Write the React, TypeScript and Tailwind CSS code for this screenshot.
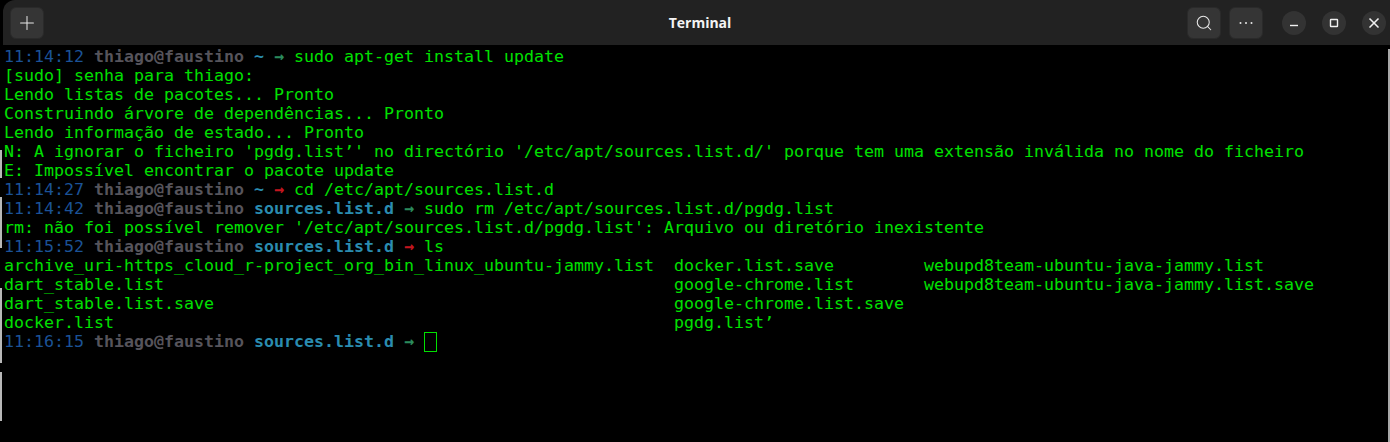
import React from 'react';
import { Plus, Search, X } from 'lucide-react';

// --- prompt segments ---
const Prompt = ({ time, path, ok, cmd }: { time: string; path: string; ok: boolean; cmd?: string }) => (
  <div className="h-[19px]">
    <span className="text-[#1b5296]">{time} </span>
    <span className="font-bold text-[#56545b]">thiago@faustino </span>
    <span className="font-bold text-[#2a8cb0]">{path} </span>
    <span className={ok ? 'font-bold text-[#2b8a5c]' : 'font-bold text-[#c4161f]'}>→ </span>
    {cmd}
  </div>
);

const Line = ({ children }: { children: string }) => <div className="h-[19px]">{children}</div>;

const HeaderButton = ({ children }: { children: React.ReactNode }) => (
  <button className="flex h-[32px] w-[34px] items-center justify-center rounded-md border border-[#2a2a2a] bg-[#353535] text-[#e8e8e8]">
    {children}
  </button>
);

const WindowButton = ({ children }: { children: React.ReactNode }) => (
  <button className="flex h-[24px] w-[24px] items-center justify-center rounded-full bg-[#333333] text-[#f0f0f0]">
    {children}
  </button>
);

export default function App() {
  return (
    <div className="flex h-[442px] w-[1390px] overflow-hidden bg-black">
      {/* sliver of desktop behind the window */}
      <div className="flex w-[3px] flex-col bg-black pt-[150px]">
        <div className="h-[28px] w-[2px] bg-[#b8b8b8]" />
        <div className="h-[19px]" />
        <div className="h-[51px] w-[2px] bg-[#b8b8b8]" />
        <div className="h-[40px]" />
        <div className="h-[75px] w-[2px] bg-[#b8b8b8]" />
        <div className="h-[9px]" />
        <div className="h-[49px] w-[2px] bg-[#b8b8b8]" />
      </div>

      <div className="flex min-w-0 flex-1 flex-col">
        <header className="grid h-[45px] grid-cols-[1fr_auto_1fr] items-center rounded-tl-xl bg-[#222222] pl-[7px]">
          <div className="flex">
            <HeaderButton>
              <Plus size={22} strokeWidth={1.1} />
            </HeaderButton>
          </div>
          <div className="font-['Open_Sans',sans-serif] text-[14px] font-bold text-[#f4f4f4]">Terminal</div>
          <div className="flex items-center justify-end pr-[4px]">
            <div className="flex items-center gap-[8px]">
              <HeaderButton>
                <Search size={18} strokeWidth={1.4} />
              </HeaderButton>
              <HeaderButton>
                <svg width="16" height="16" viewBox="0 0 16 16" fill="currentColor">
                  <circle cx="2.5" cy="8" r="1" />
                  <circle cx="8" cy="8" r="1" />
                  <circle cx="13.5" cy="8" r="1" />
                </svg>
              </HeaderButton>
            </div>
            <div className="ml-[19px] flex items-center gap-[16px]">
              <WindowButton>
                <svg width="12" height="12" viewBox="0 0 12 12" stroke="currentColor" strokeWidth="1.4" fill="none">
                  <path d="M2 8.5h8" />
                </svg>
              </WindowButton>
              <WindowButton>
                <svg width="12" height="12" viewBox="0 0 12 12" stroke="currentColor" strokeWidth="1.4" fill="none">
                  <rect x="2.5" y="2.5" width="7" height="7" rx="0.5" />
                </svg>
              </WindowButton>
              <WindowButton>
                <X size={16} strokeWidth={2.5} />
              </WindowButton>
            </div>
          </div>
        </header>

        <div className="flex flex-1">
          <pre className="flex-1 whitespace-pre bg-black pl-[1px] pt-[2px] font-['DejaVu_Sans_Mono',monospace] text-[16.61px] leading-[19px] text-[#00e000]">
            <Prompt time="11:14:12" path="~" ok cmd="sudo apt-get install update" />
            <Line>[sudo] senha para thiago:</Line>
            <Line>Lendo listas de pacotes... Pronto</Line>
            <Line>Construindo árvore de dependências... Pronto</Line>
            <Line>Lendo informação de estado... Pronto</Line>
            <Line>N: A ignorar o ficheiro 'pgdg.list’' no directório '/etc/apt/sources.list.d/' porque tem uma extensão inválida no nome do ficheiro</Line>
            <Line>E: Impossível encontrar o pacote update</Line>
            <Prompt time="11:14:27" path="~" ok={false} cmd="cd /etc/apt/sources.list.d" />
            <Prompt time="11:14:42" path="sources.list.d" ok cmd="sudo rm /etc/apt/sources.list.d/pgdg.list" />
            <Line>rm: não foi possível remover '/etc/apt/sources.list.d/pgdg.list': Arquivo ou diretório inexistente</Line>
            <Prompt time="11:15:52" path="sources.list.d" ok={false} cmd="ls" />
            <Line>archive_uri-https_cloud_r-project_org_bin_linux_ubuntu-jammy.list  docker.list.save         webupd8team-ubuntu-java-jammy.list</Line>
            <Line>dart_stable.list                                                   google-chrome.list       webupd8team-ubuntu-java-jammy.list.save</Line>
            <Line>dart_stable.list.save                                              google-chrome.list.save</Line>
            <Line>docker.list                                                        pgdg.list’</Line>
            <div className="flex h-[19px]">
              <Prompt time="11:16:15" path="sources.list.d" ok />
              <span className="h-[20px] w-[13px] border border-[#00e000]" />
            </div>
          </pre>
          <div className="mt-[4px] w-[2px] bg-[#a8a8a8]" />
        </div>
      </div>
    </div>
  );
}
